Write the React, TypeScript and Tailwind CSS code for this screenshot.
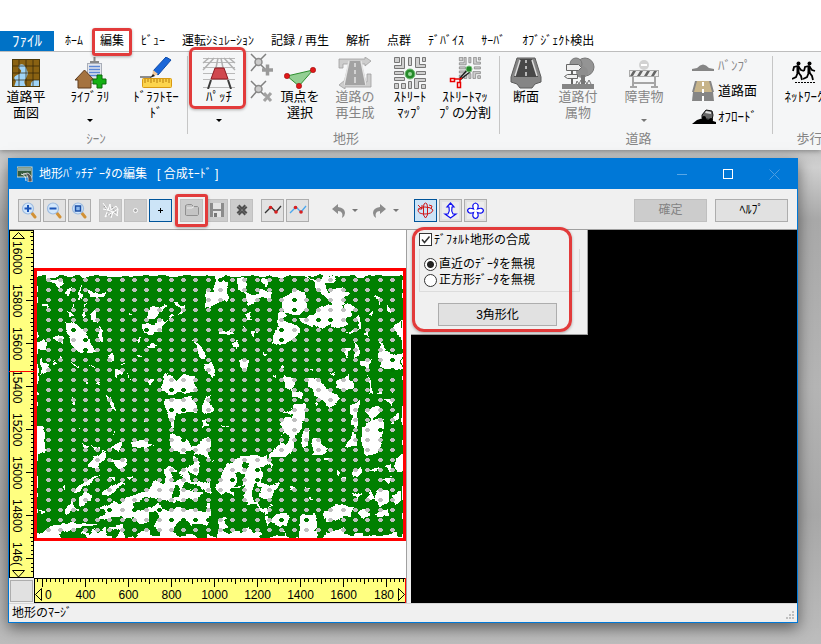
import React from "react";

const jp = "font-['Liberation_Sans','Noto_Sans_CJK_JP',sans-serif]";

function Callout({ className = "" }: { className?: string }) {
  return <span aria-hidden className={`pointer-events-none absolute z-20 border-[3px] border-[#e23b3b] shadow-[0_1px_3px_rgba(0,0,0,.3)] ${className}`} />;
}

/* ---------- ribbon icons ---------- */

const RoadPlan = () => (
  <svg width="32" height="32" viewBox="0 0 32 32">
    <rect x="2" y="2" width="28" height="28" fill="#8a6212" />
    <path d="M9 8q4-2 6 1t3 7q-1 4-3 7t2 7H4l2-6q-4-4 1-6t4-5q-4-2-2-5zM21 30q-1-5 3-7l6 0v7z" fill="#9fd4f8" />
    <path d="M9 2v28M16 2v28M23 2v28M2 9h28M2 16h28M2 23h28" stroke="#2d2208" strokeOpacity=".7" />
    <rect x="2.500" y="2.500" width="27" height="27" fill="none" stroke="#4d3a0a" />
  </svg>
);
const Library = () => (
  <svg width="34" height="32" viewBox="0 0 34 32">
    <rect x="14.500" y="6.500" width="14" height="20" fill="#e3e6ec" stroke="#a9aeb8" />
    <path d="M21.500 0v5M17 5h9" stroke="#888" strokeWidth="2" />
    <path d="M16 9.500h11M16 12.500h11M16 15.500h11M16 18.500h11" stroke="#5b87d6" strokeWidth="1.500" />
    <path d="M2 23 11.500 13 21 23h-3v8H5v-8z" fill="#a5733f" stroke="#5e3c1e" />
    <path d="M24 18h5v4h4v5h-4v4h-5v-4h-4v-5h4z" fill="#14b014" stroke="#0a6a0a" />
  </svg>
);
const Draft = () => (
  <svg width="34" height="32" viewBox="0 0 34 32">
    <path d="M1 20h11" stroke="#222" />
    <path d="M27 0l5 3-13 15-5-4z" fill="#1a66d8" stroke="#0d4aa8" />
    <path d="M14 13l5 4-6 3z" fill="#f3c99a" /><path d="M11 21l3-4 2 2z" fill="#222" />
    <rect x="3.500" y="21.500" width="29" height="9" rx="1" fill="#fcd44c" stroke="#d99a12" />
    <path d="M6 22v4M9 22v3M12 22v4M15 22v3M18 22v4M21 22v3M24 22v4M27 22v3M30 22v4" stroke="#b57a08" />
  </svg>
);
const Patch = () => (
  <svg width="34" height="32" viewBox="0 0 34 32">
    <path d="M1 1.500h32M1 5.500h32M1 10.500h32M1 16.500h32M1 22.500h32M1 30.500h32" stroke="#b9b9b9" />
    <path d="M12 1 1 13M7 1 1 6M16 1l-2 10M19 1l2 10M22 1l11 12M27 1l6 5" stroke="#b0b0b0" fill="none" strokeWidth="1.500" />
    <path d="M13 11h9l4 11H9z" fill="#d0484e" stroke="#8d1a20" />
    <path d="M9 23 6 32M26 23l3 9" stroke="#3c3c3c" strokeWidth="2" />
  </svg>
);
function Vertex({ plus }: { plus?: boolean }) {
  return (
    <svg width="23" height="23" viewBox="0 0 23 23">
      <path d="M1 1l6 6M16 1l-6 6M1 18l6-7M11 12l4 4" stroke="#808080" strokeWidth="1.500" />
      <circle cx="8.500" cy="9" r="3.500" fill="#ccc" stroke="#8c8c8c" strokeWidth="1.500" />
      {plus ? <path d="M17.500 11.500v11M12 17h11" stroke="#9a9a9a" strokeWidth="3.500" /> : <path d="M14 13l7 8M21 13l-7 8" stroke="#a2a2a2" strokeWidth="3" />}
    </svg>
  );
}
const SelectVertex = () => (
  <svg width="32" height="32" viewBox="0 0 32 32">
    <path d="M3 19 29 13 15 29z" fill="#93cf93" stroke="#2f8f2f" />
    {[[3, 19], [29, 13], [15, 29]].map(([x, y]) => <circle key={x} cx={x} cy={y} r="2.700" fill="#e01818" stroke="#8e0909" strokeWidth=".5" />)}
  </svg>
);
const Regenerate = () => (
  <svg width="34" height="32" viewBox="0 0 34 32">
    <path d="M1 11V2h26V0l6 4-6 5V7H5v4z" fill="#cdcdcd" stroke="#a0a0a0" strokeWidth=".8" />
    <path d="M33 17v13H7v2l-6-4 6-5v2h22v-8z" fill="#cdcdcd" stroke="#a0a0a0" strokeWidth=".8" />
    <path d="M11 4h12l6 24H5z" fill="#a2a2a2" />
    <path d="M11 4 6 28M23 4l5 24M17 6v4M17 13v4M17 20v6" stroke="#e4e4e4" strokeWidth="1.500" />
  </svg>
);
function Blocks() {
  return (
    <g fill="#d0d0d0" stroke="#777">
      <path d="M.500.500h5v5h-5zM.500 8.500h7v-8h3v11h-10zM.500 14.500h9v3h-9zM.500 20.500h10v3h-10zM.500 26.500h4v5h-4zM7.500 26.500h4v5h-4z" />
      <path d="M14.500.500h3v8h-3zM21.500.500v10h10v-3h-6v-7zM28.500.500h3v4h-3zM22.500 14.500h9v3h-9zM20.500 21.500h11v3h-7v7h-4zM14.500 24.500h3v7h-3zM27.500 27.500h4v4h-4z" />
    </g>
  );
}
const StreetMap = () => (
  <svg width="32" height="32" viewBox="0 0 32 32">
    <Blocks />
    <circle cx="16" cy="17" r="5" fill="#258a2a" stroke="#77c07a" /><circle cx="16" cy="17" r="2" fill="#9bd79b" />
  </svg>
);
const StreetSplit = () => (
  <svg width="32" height="32" viewBox="0 0 32 32">
    <g transform="translate(10 0) scale(.68)"><Blocks /></g>
    <path d="M20 11 11 21M22 14 11 23" stroke="#222" strokeWidth="1.500" />
    <circle cx="20" cy="12" r="3" fill="#258a2a" stroke="#77c07a" />
    <path d="M1.500 21.500h4v3h-4zM8.500 25.500h3v5h-3z" fill="#fff" stroke="#e80000" strokeWidth="1.500" /><path d="M6 22h5l2-1M11 25v-3" stroke="#e80000" strokeWidth="1.500" fill="none" />
  </svg>
);
const Section = () => (
  <svg width="32" height="32" viewBox="0 0 32 32">
    <path d="M7 1h18l6 19v5l-6 2-3 4H10l-3-4-6-2v-5z" fill="#858585" stroke="#5c5c5c" />
    <path d="M10 2h12l6 18H4z" fill="#484848" /><path d="M16 3v3M16 9v3M16 15v4M10 3 5 19M22 3l5 16" stroke="#ddd" strokeWidth="1.500" />
  </svg>
);
const Accessory = () => (
  <svg width="34" height="32" viewBox="0 0 34 32">
    <circle cx="24" cy="10" r="9" fill="#949494" stroke="#777" /><circle cx="15" cy="7" r="6" fill="#949494" stroke="#777" /><circle cx="21" cy="15" r="6" fill="#8e8e8e" />
    <path d="M20 18h4v10h-4z" fill="#777" /><path d="M15 27l1-3 2 3 2-4 2 4 2-3 2 3 2-4 2 4" stroke="#777" fill="none" />
    <path d="M11 13v15" stroke="#666" strokeWidth="2" />
    <path d="M5.500 7.500h12l3 3-3 3h-12zM16.500 17.500v4h-10l-3-2 3-2z" fill="#efefef" stroke="#666" />
    <path d="M1 27h32v5H1z" fill="#858585" />
  </svg>
);
const Obstacle = () => (
  <svg width="32" height="32" viewBox="0 0 32 32">
    <circle cx="16" cy="8" r="5" fill="#d2d2d2" /><path d="M13 8h6" stroke="#fff" strokeWidth="2" />
    <path d="M5 19v12M27 19v12M2 30h7M23 30h7M5 26h22" stroke="#a5a5a5" strokeWidth="2" fill="none" />
    <rect x="1.500" y="13.500" width="29" height="6" fill="#eee" stroke="#aaa" />
    <path d="M5 14h3l-3 5H2zM12 14h3l-3 5H9zM19 14h3l-3 5h-3zM26 14h3l-3 5h-3z" fill="#666" />
  </svg>
);
const Bump = () => <svg width="22" height="12" viewBox="0 0 22 12"><path d="M0 11V9l5-1q6-7 12 0l5 1v2z" fill="#858585" /></svg>;
const Surface = () => (
  <svg width="22" height="22" viewBox="0 0 22 22"><path d="M4 1h14l3 11H1z" fill="#c7b48a" /><path d="M1 12h20l1 9H0z" fill="#858585" /><path d="M11 2v4M11 9v4M11 16v5" stroke="#fff" strokeWidth="2" /><path d="M0 12 3 1h2L2 12zM20 12 17 1h2l3 11z" fill="#858585" /></svg>
);
const Offroad = () => (
  <svg width="24" height="16" viewBox="0 0 24 16"><path d="M0 15l5-4 6-2 7 2 6 2v2z" /><path d="M10 6l4-5 6 1 1 4-1 5-10-2z" fill="#666" stroke="#111" /><path d="M14 2l5 1v2l-6-1z" fill="#ddd" /><circle cx="12" cy="9" r="2" /><circle cx="19" cy="11" r="2" /></svg>
);
const Walkers = () => (
  <svg width="24" height="32" viewBox="0 0 24 32">
    {[0, 11].map((x) => (
      <g key={x} transform={`translate(${x} 4)`} fill="none" stroke="#000" strokeWidth="1.800">
        <circle cx="6.500" cy="2.500" r="2" fill="#000" stroke="none" />
        <path d="M6 5v7" strokeWidth="3" /><path d="M1 10l1-4 4-1 3 4 3 1M6 11l3 4 1 4M6 11l-2 5-4 2" />
      </g>
    ))}
    <path d="M3 25.500h20" stroke="#000" strokeDasharray="2 1" />
  </svg>
);

type ToolProps = { icon: React.ReactNode; lines: string[]; width: string; arrow?: boolean; off?: boolean; marked?: boolean };
function RibbonTool({ icon, lines, width, arrow, off, marked }: ToolProps) {
  return (
    <button type="button" disabled={off} className={`relative flex shrink-0 flex-col items-center text-[13px] leading-4 whitespace-nowrap ${width} ${off ? "text-[#858585]" : "text-black"}`}>
      {marked && <Callout className="-top-2.5 -left-0.5 right-px h-[62px] rounded-md" />}
      <span className="flex h-8 items-center">{icon}</span>
      {lines.map((l) => <span key={l}>{l}</span>)}
      {arrow && <span className={`mt-3.5 border-x-[3px] border-t-[3px] border-x-transparent ${off ? "border-t-[#777]" : "border-t-black"}`} />}
    </button>
  );
}
function Group({ label, width, children }: { label: string; width: string; children: React.ReactNode }) {
  return (
    <section aria-label={label} className={`relative shrink-0 ${width}`}>
      <div className="flex h-[77px] items-start pt-[3px]">{children}</div>
      <div className="pl-1 text-center text-[13px] leading-4 text-[#858585]">{label}</div>
      <span className="absolute top-0.5 right-0 h-[78px] w-px bg-[#c6c6c6]" />
    </section>
  );
}

function Ribbon() {
  const tabs = ["ﾋﾞｭｰ", "運転ｼﾐｭﾚｰｼｮﾝ", "記録 / 再生", "解析", "点群", "ﾃﾞﾊﾞｲｽ", "ｻｰﾊﾞ", "ｵﾌﾞｼﾞｪｸﾄ検出"];
  return (
    <header className="overflow-hidden bg-white pt-[31px] shadow-[0_1px_5px_rgba(0,0,0,.35)]">
      <nav className="flex h-5 items-center gap-[17px] text-[12px] whitespace-nowrap">
        <button type="button" className="-mr-1.5 h-5 w-[54px] shrink-0 bg-[#0072c6] text-[15px] leading-5 text-white">ﾌｧｲﾙ</button>
        <button type="button">ﾎｰﾑ</button>
        <button type="button" className="relative">
          編集
          <Callout className="-inset-x-2 -top-1 -bottom-1.5 rounded-[3px]" />
        </button>
        {tabs.map((t) => <button type="button" key={t}>{t}</button>)}
      </nav>
      <div className="flex h-[99px] border-t border-[#bdbdbd] bg-[#f5f6f7] pt-0.5">
        <Group label="ｼｰﾝ" width="w-[188px]">
          <RibbonTool icon={<RoadPlan />} lines={["道路平", "面図"]} width="w-[52px]" />
          <RibbonTool icon={<Library />} lines={["ﾗｲﾌﾞﾗﾘ"]} width="w-[76px]" arrow />
          <RibbonTool icon={<Draft />} lines={["ﾄﾞﾗﾌﾄﾓｰ", "ﾄﾞ"]} width="w-14" />
        </Group>
        <Group label="地形" width="w-[312px]">
          <div className="w-[3px] shrink-0" />
          <RibbonTool icon={<Patch />} lines={["ﾊﾟｯﾁ"]} width="w-14" arrow marked />
          <div className="-mt-1 flex w-[26px] shrink-0 flex-col items-end gap-1">
            <button type="button" aria-label="頂点の追加"><Vertex plus /></button>
            <button type="button" aria-label="頂点の削除"><Vertex /></button>
          </div>
          <RibbonTool icon={<SelectVertex />} lines={["頂点を", "選択"]} width="w-[54px]" />
          <RibbonTool icon={<Regenerate />} lines={["道路の", "再生成"]} width="w-14" off />
          <RibbonTool icon={<StreetMap />} lines={["ｽﾄﾘｰﾄ", "ﾏｯﾌﾟ"]} width="w-[54px]" />
          <RibbonTool icon={<StreetSplit />} lines={["ｽﾄﾘｰﾄﾏｯ", "ﾌﾟの分割"]} width="w-14" />
        </Group>
        <Group label="道路" width="w-[273px]">
          <RibbonTool icon={<Section />} lines={["断面"]} width="w-[52px]" />
          <RibbonTool icon={<Accessory />} lines={["道路付", "属物"]} width="w-[52px]" off />
          <div className="w-3.5 shrink-0" />
          <RibbonTool icon={<Obstacle />} lines={["障害物"]} width="w-[52px]" arrow off />
          <div className="-mt-0.5 ml-[22px] flex flex-col text-[13px]">
            <button type="button" disabled className="flex h-[22px] items-center gap-1 text-[#858585]"><Bump />ﾊﾞﾝﾌﾟ</button>
            <button type="button" className="flex h-7 items-center gap-1"><Surface />道路面</button>
            <button type="button" className="flex h-6 items-center gap-0.5"><Offroad />ｵﾌﾛｰﾄﾞ</button>
          </div>
        </Group>
        <Group label="歩行者" width="w-[82px]">
          <RibbonTool icon={<Walkers />} lines={["ﾈｯﾄﾜｰｸ"]} width="w-[62px]" />
        </Group>
      </div>
    </header>
  );
}

/* ---------- dialog toolbar ---------- */

function Lens({ kind }: { kind: "in" | "out" | "fit" }) {
  return (
    <svg width="17" height="17" viewBox="0 0 17 17">
      <path d="M10 10l4 5" stroke="#d29136" strokeWidth="3" strokeLinecap="round" />
      <circle cx="7" cy="6.500" r="5.500" fill="#d3e7fb" stroke="#9dbbe0" strokeWidth="1.200" />
      {kind === "fit" ? <rect x="4.500" y="4" width="5" height="5" fill="#8bb8ee" stroke="#1c4fa5" strokeWidth="1.500" /> : <path d={kind === "in" ? "M3.500 6.500h7M7 3v7" : "M3.500 6.500h7"} stroke="#1c55b8" strokeWidth="2" />}
    </svg>
  );
}
function ToolButton({ label, state = "normal", marked, children }: { label: string; state?: "normal" | "off" | "on"; marked?: boolean; children: React.ReactNode }) {
  const look = state === "on" ? "border-[#00549a] bg-[#cce4f7]" : state === "off" ? "border-[#c0c0c0] bg-[#cccccc]" : "border-[#adadad] bg-[#e2e2e2]";
  return (
    <button type="button" aria-label={label} className={`relative flex size-[23px] shrink-0 items-center justify-center border ${look}`}>
      {children}
      {marked && <Callout className="-inset-[6px] rounded-[3px]" />}
    </button>
  );
}
function History({ label, flip }: { label: string; flip?: boolean }) {
  return (
    <button type="button" aria-label={label} className="flex items-center gap-1.5">
      <svg width="15" height="15" viewBox="0 0 15 15" className={flip ? "-scale-x-100" : ""}><path d="M1 6l6-5v3q7 1 7 6 0 3-3 5 1-3 0-5-1-2-4-2v3z" fill="#8c8c8c" /></svg>
      <span className="border-x-[3px] border-t-[3px] border-x-transparent border-t-[#777]" />
    </button>
  );
}
function Toolbar() {
  const set = "flex gap-0.5";
  return (
    <div className="flex h-[41px] shrink-0 items-center gap-2 border-b border-[#a0a0a0] bg-[#f0f0f0] pt-0.5 pr-[9px] pl-[9px]">
      <div className={set}>
        <ToolButton label="拡大"><Lens kind="in" /></ToolButton>
        <ToolButton label="縮小"><Lens kind="out" /></ToolButton>
        <ToolButton label="全体"><Lens kind="fit" /></ToolButton>
      </div>
      <div className={set}>
        <ToolButton label="三角網" state="off"><svg width="17" height="17" fill="none"><path d="M1 1l5 7 2-6 1 6 5-4M1 7l5 1-3 7M6 8l5 2 5-3M11 10l-2 6M11 10l5 4M3 15l8-5M14 4l2 3-1 7" stroke="#fff" /><path d="M2 4l5 7M10 5l4 7M5 13l6 0" stroke="#888" strokeDasharray="1 2" /></svg></ToolButton>
        <ToolButton label="点" state="off"><svg width="7" height="7"><circle cx="3.500" cy="3.500" r="2" fill="#aaa" stroke="#fff" /></svg></ToolButton>
        <ToolButton label="追加" state="on"><svg width="5" height="5"><path d="M0 2.500h5M2.500 0v5" stroke="#000" /></svg></ToolButton>
      </div>
      <div className={set}>
        <ToolButton label="開く" state="off" marked><svg width="15" height="14"><path d="M1.500 12V2.500l2-1h4l2 2h4l1 1v7l-1 1h-11z" fill="#c4c4c4" stroke="#909090" /><path d="M3 5h5l2-1.500" stroke="#eee" fill="none" /></svg></ToolButton>
        <ToolButton label="保存" state="off"><svg width="14" height="14"><path d="M0 0h14v14H0z" fill="#8b8b8b" /><path d="M3 0h8v6H3zM3 8h8v6H3z" fill="#e4e4e4" /><path d="M4 10h3v4H4z" fill="#777" /></svg></ToolButton>
        <ToolButton label="削除" state="off"><svg width="12" height="12"><path d="M2 2l8 8M10 2l-8 8" stroke="#505050" strokeWidth="4" /><path d="M2 2l8 8M10 2l-8 8" stroke="#888" strokeDasharray="1 1" /></svg></ToolButton>
      </div>
      <div className={set}>
        {["#333", "#4aa7ee"].map((c) => (
          <ToolButton key={c} label={c === "#333" ? "折れ線" : "折れ線の補正"}><svg width="18" height="12"><path d="M1 9l6-6 5 5 5-6" fill="none" stroke={c} strokeWidth="1.300" /><circle cx="6.500" cy="3.500" r="1.800" fill="#d82020" /><circle cx="12" cy="8" r="1.800" fill="#d82020" /></svg></ToolButton>
        ))}
      </div>
      <div className="ml-3.5 flex gap-3.5"><History label="元に戻す" /><History label="やり直し" flip /></div>
      <div className={`${set} ml-[7px]`}>
        <ToolButton label="回転" state="on"><svg width="17" height="17" fill="none" stroke="#d01818"><path d="M6.500 5q0-4 2-4t2 4v8l-2 3-2-3zM1 8q1-3 7-3t8 3q-1 4-8 4T1 8zM1 3l4 4M5 3v4H1M12 3l3 1-1 3" /></svg></ToolButton>
        <ToolButton label="前後移動"><svg width="17" height="17"><rect width="17" height="17" fill="#ececec" /><path d="M8.500 1 12 5h-2q-1 4 1 7h3l-5.500 4L3 12h3q2-3 1-7H5z" fill="#fff" stroke="#1010f0" strokeWidth="1.200" /></svg></ToolButton>
        <ToolButton label="平行移動"><svg width="17" height="17"><rect width="17" height="17" fill="#ececec" /><path d="M8.500 1q4 1 2 6 5-2 6 1.500-1 4-6 2 2 5-2 6-4-1-2-6-5 2-6-2 1-3.500 6-1.500-2-5 2-6z" fill="#fff" stroke="#1010f0" strokeWidth="1.200" /></svg></ToolButton>
      </div>
      <div className="ml-auto flex gap-2 text-[12px]">
        <button type="button" disabled className="h-[23px] w-[73px] border border-[#bfbfbf] bg-[#cccccc] leading-5 text-[#838383]">確定</button>
        <button type="button" className="h-[23px] w-[73px] border border-[#adadad] bg-[#e1e1e1] leading-5">ﾍﾙﾌﾟ</button>
      </div>
    </div>
  );
}

/* ---------- terrain map ---------- */

/* Each sheet covers a quarter of the survey; outlines are in thirds of a map unit. */
const sheets = [
  {
    at: "translate(0 228) scale(.33333)",
    gaps:
      "M138 138l10 12 37 0 3 18-12 14-12-16-15-4-10-12zM125 223l15 3 5 14-15-8zM248 167l-8 23 3 22-11 4 3-26zM265 190l20 1 13 8 20-3-3 12-25-2-25-4zM195 192l20-12-3 15-7 13zM202 248l12 3 6 12-16 0zM215 226l8 10-8 6zM272 262l14-14 0 26 9 12-20-6zM246 260l12-12 2 14-10 8zM192 283l23-3 20 10 20 20 15 30 23 32-38 1-27-3-13-25-15-25 5-20zM298 295l5 3 5 38-10 6zM110 340l20-3 15 11-5 15-15 3-15-5zM160 328l20-3 11 10-3 14-13-8zM122 385l8 15 17 10-10 20-18 12 4-27zM322 380l10-9 12 9-8 19-12-8zM342 420l28 4-2 18-18 4-8-6zM425 290l15-8 15 8 25-10 15-15 20-7 22-26 22 3-14 20-25 5-30 28 0 20-30 5-5 10-25-6zM440 250l20-16 30 5 5 23-25 9-30-3zM408 342l15-12-6 15zM440 350l20-5 12 10-17 10zM485 460l7-24 22 8 16 14 20-20 30 9 6 13-2 32-85 6-11-10zM494 512l76-5 18 12 0 32-62 8-6 45-10-28-12-22zM580 337l32 28 3 28-15-2-12-22zM438 454l30-6-14 28zM318 498l18 14 10 34-16-6zM214 512l9-9-2 30-10-4zM284 460l17-3-4 14zM610 512l22-14 0 60-22-8zM618 210l12-12 0 42-12-8zM408 376l20 6-8 8zM265 404l22 16-10-4zM213 397l20 22-10-6zM120 500l-10 8 2-10zM250 228l14-6-10 12zM386 252l10 5-6 5zM388 430l4 22-4-2zM365 405l8 2-4 4zM618 408l14-6 0 20zM605 580l12-6 4 24-14 4zM435 570l6 10-6 2zM255 455l14 10-5 5zM525 222l10-4 6 14-10 6zM475 238l16-10 10 8-20 10zM185 378l8 8-12 4zM160 400l14 5-10 3z",
    islands: "M470 268l22-14 15 12-15 12zM512 250l18-14 12 8-16 14z",
  },
  {
    at: "translate(205 228) scale(.33333)",
    gaps:
      "M30 138l30 6-4 14 10 8 6 48-36 10-36 16 0-48 26-4 4-24zM95 146l35 4-6 30 36-12 10 20 30 2-4 22-32-6-14 20-22 5-8-27-20-20zM170 146l22 10-4 20-18-12zM300 140l42 22 14-18 40 4-8 16-30 0 14 26 42-12 22 20-32 18 25 12-42 10-30-36-26-18 0-20zM268 188l32 0 6 50-22 20-24 6-26 4 46 32 4 15-34 30-25 12-26-18 16-42 0-44 16 0-2-40 25-20zM285 270l45-8 10-22 35-14 40 7 15 57-30 10-25-8-26 13-19-16-30 2zM420 240l14-14 20 10-20 12 8 18-20 4zM103 392l30 8-11 36-17-16zM0 400l20 12 18 16-16 26-17-28zM42 316l28-12 20 14-26 5zM80 345l18-6-5 26zM120 262l14-6 4 22-12-4zM135 315l30-6-20 14zM110 290l12 4-6 6zM305 455l46-6 8 26 42 36-20 26-32-22-30-26zM390 460l42-22 14 38-26 14-26-10zM524 332l20 36 16 8 32 2 0 52-32-6-38-4zM240 440l32 20-10 30-22-12zM262 488l38 4-4 18-36-4zM268 530l34 0 0 52-32 20-42 0 2-18 34-14zM235 555l25-14 14 6-28 14zM0 498l30 46-10 12-20-2zM435 538l35-20-15 34 6 50-22-12zM485 550l30-22 16 18-30 34zM538 514l34-6-12 30zM418 366l18-8-8 32zM448 345l18 26-16 26zM468 400l26-6 0 26-26-4zM486 438l16 62-12-2zM508 198l18 16-5 18zM545 222l15 30-14-4zM560 302l30-28 4 48-22-6zM484 600l44-32 14 32zM422 318l40-18-10 12-26 8zM450 270l14-12 0 40zM488 260l14-12-4 20zM470 318l18-6 6 20zM370 440l24-8-8 14zM316 424l5 6 0-8zM200 448l14-10-8 16zM170 376l16 2-8 6zM226 420l8-10 6 12zM330 520l14 10-10 5zM520 500l10-12 0 12zM560 490l12-4-4 12zM45 598l25-4 0 6zM560 575l18-20 8 20z",
    islands: "M240 260l25 4 20 10-10 16-20-12zM120 190l12-20 30-4 6 18-26 18z",
  },
  {
    at: "translate(0 420) scale(.33333)",
    gaps:
      "M110 12l20 10 6 72-26 12zM388 70l42-12 16 14 16 0-26 14-36-6zM268 122l42-28 12 6-12 25-20 20-22 0zM328 84l44-20-20 26zM243 64l24 12-6 10zM275 68l26 18-18 0zM330 124l46-10 5 20-20 16zM218 216l42-34 48-18-36 26-50 34zM233 236l27-22 16 10-4 22-28 12zM194 272l22-34 8 26 22 6-48 16zM310 215l50-25 18-2-40 30-25 12zM110 352l22-18 24-18 84-8 50 6 24-4 50 0 6 20-40 24zM370 238l68-24 34-26 20 0 5-40 14-12 2-92 60-4 30-20 27-10 0 344-306 0-6-44-24-16 40-24zM300 265l40-20 20 14-48 20zM150 340l22-4-4 20-20 0zM112 272l20 6-14 8zM180 198l14-4-4 14zM325 172l18-6 0 14zM382 164l22 4-10 14zM236 20l4 6-4 6zM338 30l8 6-8 4zM458 188l16-8 16 18-14 30-26 4z",
    islands:
      "M540 42l30 30 40-10 20-20 0-24-60 16zM510 96l30 4 40-8-4 40-30 20-40-20-36 30-10-40zM585 106l20 18-10 42 35 22 0-70zM512 158l26-6 12 22-24 10zM524 200l14 10 0 20-20-2zM566 156l30 14 30 0 0 10-50 4zM556 188l40 12 34 26 0 20-40 10-30 0-40 4 10-14 70-10 14-16-66-16zM400 252l50-22 70 20 100 5-10 16-72-8-50 2-20-12-58 18zM450 278l20-6 6 20-18 30 20 10 0 20-26-8zM370 300l30-6 20 20 36-4 4 16-50 12-10 16-30-2zM300 300l66-10 10 18-60 12-20 16-14-8zM540 300l30 16 40-2 14 14-6 30-26 0-12-16-40 4-16-10zM290 320l-20 20-34-10 24 26-52 4-18-10-10 6 4-16 46-14zM326 322l30 12-8 18-32-4z",
  },
  {
    at: "translate(205 420) scale(.33333)",
    gaps:
      "M234-6l66 0-20 40-16 24 0 30-30 40-38-6-4-22 34-24 8-36zM300 26l12-8-2 60-10 10-8-30zM318 84l4-24 18-10 8 22 22 14-16 16-28 0zM68 132l38-24 76-4 20 36-6 40 34 8-20 20-14 32 14 26-40 20-66-22-46-14-24-48 16-40zM0 60l0 30-6 16 20-4zM0 125l30-8-8 5zM420 80l26-46 10 30-10 18zM470 20l20-10 20-10 24 0 0 40-16 56-32 12-16-24 0-40zM440 148l30-6 6 14-20 18-14-8zM258 195l16 0 0 14-18 2zM206 98l20 0 10 20-26 4zM490 156l30-12-4 14zM520 206l30 6 0 34-24 14-20-26zM484 226l12-14 10 20-16 8zM538 140l22-6-4 20zM572 116l18-10 4 50-20-4zM540 178l20-10-6 24zM370 264l40-8 30 6 0 30-24-4-50 22-14-30zM286 290l46-8 6 30-12 30-10 10-30 4-14-30zM510 284l40-14 4 16-32 6zM560 224l28-14 4 30-22 12zM460 280l20-14 10 20-12 8zM180 290l60-20 20 30-6 20-46-10-26 10zM210 340l30-10 0 22-30 4zM40 300l20-10 10 24-30 20 70 4 20-10 40 10-10 16-120 0 0-24zM-6 300l20 6 6 14-26-6zM270 338l70-4-10 20-60 0zM358 338l60-16 0 32-60 0zM446 338l30 0-6 16-26 0zM492 344l80-4 0 14-80 0zM300 205l22 4-20 4zM310 235l22 2-20 4zM440 226l30-10-14 22zM560 8l12-14-2 20zM354 118l10-8 4 12zM396 150l10 12-8 4zM406 172l14-6-4 14z",
    islands:
      "M120 120l14 8-8 14-14-6zM96 160l20 4-4 30-18-2zM168 138l20 0 26 26 26-2-20 24-30 10-20-8zM94 204l20-4-4 26 14 20-36 10-4-14zM150 190l18 10-10 26 30 16 20-10 8 18-28 14-40-18zM60 220l36 26 60 14 20 18-12 12-40-14-60-12-30-20zM20 150l14 14-6 40-14 0 0-28zM20 264l14 10 0 30-12 32-20 6 8-30zM60 300l40-10 80 16 14 30 40 0 0 16-60-8-24-28-50 4-30 10zM260 280l22 20-2 50-30 2-10-14zM342 300l18-4 4 20-10 40-20 0 6-26zM240 40l14 8-10 24-16-8zM204 114l30-2 24 12-18 14-36-8zM184 270l46-14 20 0 0 16-30 4-26 20z",
  },
];
const openGround = new Set("2,5 3,6 3,7 8,5 10,11 11,11 10,13 11,13 14,0 20,2 20,3 22,4 23,4 19,5 19,6 28,8 28,9 11,16 5,23 7,23 9,23 10,24 11,24 12,24 15,20 15,21 17,19 17,20 19,24 13,24 21,24 22,24 27,15".split(" "));

/* Outlines are filled one by one, so that overlapping ones add up whatever their winding. */
const outlines = (d: string) => d.split("z").filter(Boolean).map((o) => <path key={o} d={`${o}z`} />);

function TerrainMap() {
  const nodes: React.ReactNode[] = [];
  for (let c = 0; c < 29; c++)
    for (let r = 0; r < 26; r++) {
      const x = Math.round(48 + c * 12.28);
      const y = 279 + r * 10;
      nodes.push(
        <g key={`${c},${r}`} fill={openGround.has(`${c},${r}`) ? "#007a00" : "#c0c0c0"}>
          <rect x={x - 2} y={y} width="5" height="2" />
          <rect x={x - 1} y={y - 1} width="3" height="4" />
        </g>,
      );
    }
  return (
    <svg className="h-full w-full bg-white" viewBox="34 230 372 348" preserveAspectRatio="xMinYMin meet" shapeRendering="crispEdges" role="img" aria-label="地形ﾊﾟｯﾁ">
      <defs>
        <filter id="rough" x="-5%" y="-5%" width="110%" height="110%">
          <feTurbulence type="fractalNoise" baseFrequency=".12" numOctaves="1" seed="4" />
          <feDisplacementMap in="SourceGraphic" scale="8" xChannelSelector="R" yChannelSelector="G" />
        </filter>
      </defs>
      <rect x="35.500" y="269.500" width="369" height="270" fill="#fff" stroke="#f00" strokeWidth="3" />
      <g filter="url(#rough)">
        <rect x="37" y="276" width="366" height="261" fill="#008000" />
        <path d="M37 538V533l90-2 60 4 50 2 60 0 50-2 56 2v1z" fill="#fff" />
        {sheets.map((s) => (
          <g key={s.at} transform={s.at}>
            <g fill="#fff">{outlines(s.gaps)}</g>
            <g fill="#008000" stroke="#008000" strokeWidth="4" strokeLinejoin="round">{outlines(s.islands)}</g>
          </g>
        ))}
      </g>
      <path d="M35.500 540V269.500H404.500V539.500H34" fill="none" stroke="#f00" strokeWidth="3" />
      {nodes}
    </svg>
  );
}

function VerticalRuler() {
  const labels = ["16000", "15800", "15600", "15400", "15200", "15000", "14800", "146("];
  return (
    <svg className="h-full w-[25px] shrink-0 bg-[#ffff80]" viewBox="9 230 25 348" preserveAspectRatio="xMinYMin slice">
      <path d="M9 230.500h25M33.500 230v348M9.500 230v348M9 577.500h25" stroke="#000" fill="none" />
      <g shapeRendering="crispEdges" stroke="#000">
        {Array.from({ length: 80 }, (_, i) => { const y = Math.round(231.500 + i * 4.3) + 0.5; return <path key={i} d={`M${i % 10 === 6 ? 26 : i % 10 === 1 ? 30 : 31} ${y}H34`} />; })}
      </g>
      {labels.map((l, i) => <text key={l} x={i === 7 ? 542 : 241 + i * 43} y="-13" transform="rotate(90)" className="text-[12px]">{l}</text>)}
      <path d="M18.500 232.500l6 6h-12zM12.500 570.500h12l-6 6.500z" fill="#ffff80" stroke="#000" />
      <path d="M9 371.500h25" stroke="#f00" />
    </svg>
  );
}
function HorizontalRuler() {
  const labels = ["400", "600", "800", "1000", "1200", "1400", "1600"];
  return (
    <svg className="h-full min-w-0 flex-1 bg-[#ffff80]" viewBox="34 578 372 25" preserveAspectRatio="xMinYMin slice">
      <path d="M34 578.500h372M34 602.500h372M34.500 578v25" stroke="#000" fill="none" />
      <g shapeRendering="crispEdges" stroke="#000">
        {Array.from({ length: 86 }, (_, i) => { const x = Math.round(37.400 + i * 4.3) + 0.5; return <path key={i} d={`M${x} 579v${i % 10 === 1 ? 8 : i % 10 === 6 ? 5 : 3}`} />; })}
      </g>
      <text x="45" y="598.500" className="text-[12px]">0</text>
      {labels.map((l, i) => <text key={l} x={85.500 + i * 43} y="598.500" textAnchor="middle" className="text-[12px]">{l}</text>)}
      <text x="374" y="598.500" className="text-[12px]">180</text>
      <path d="M35.500 594.500l6-6v12zM398.500 588.500v12l6-6z" fill="#ffff80" stroke="#000" />
      <path d="M405.500 578v25" stroke="#f00" />
    </svg>
  );
}

function OptionsPanel() {
  const radio = "size-[13px] appearance-none rounded-full border border-[#333] bg-white checked:bg-[radial-gradient(circle,#222_0_3px,#fff_4px)]";
  return (
    <form className="relative h-[105px] w-[177px] border-r border-b border-[#a0a0a0] bg-[#f0f0f0] pl-2 text-[12px] leading-4">
      <label className="flex h-[19px] items-center gap-0.5 whitespace-nowrap">
        <span className="relative flex size-[13px]">
          <input type="checkbox" defaultChecked className="peer size-[13px] appearance-none border border-[#333] bg-white" />
          <svg width="13" height="13" className="pointer-events-none absolute inset-0 hidden peer-checked:block"><path d="M3 6.500l2.500 3 5-6" fill="none" stroke="#333" strokeWidth="1.500" /></svg>
        </span>
        ﾃﾞﾌｫﾙﾄ地形の合成
      </label>
      <fieldset className="mr-[7px] h-[43px] border border-t-0 border-[#dcdcdc] pt-[7px] pl-1 whitespace-nowrap">
        <label className="flex items-center gap-0.5"><input type="radio" name="ignore" defaultChecked className={radio} />直近のﾃﾞｰﾀを無視</label>
        <label className="flex items-center gap-0.5"><input type="radio" name="ignore" className={radio} />正方形ﾃﾞｰﾀを無視</label>
      </fieldset>
      <button type="button" className="mt-[11px] ml-[19px] h-[23px] w-[119px] border border-[#adadad] bg-[#e1e1e1] leading-5">3角形化</button>
      <Callout className="-top-[3px] left-px right-[15px] bottom-0.5 rounded-xl" />
    </form>
  );
}

function PatchDialog() {
  return (
    <main className="mt-2 mr-[23px] mb-[21px] ml-2 flex flex-1 flex-col border border-[#0078d7] bg-[#f0f0f0] shadow-[0_5px_14px_rgba(0,0,0,.5)]">
      <div className="flex h-[30px] shrink-0 items-center bg-[#0078d7] pl-2 text-[12px] text-white">
        <svg width="16" height="16" viewBox="0 0 16 16"><rect x="0" y="1" width="15" height="10" fill="#355b3d" stroke="#d7dccf" /><path d="M1 2h13v3H1z" fill="#8ba9a5" /><path d="M6 8q6-1 5 8h4q1-6-4-9z" fill="#555" stroke="#e5e5e5" strokeWidth=".8" /><path d="M4 8q5 1 5 7" stroke="#eee" fill="none" /></svg>
        <h1 className="ml-1.5 whitespace-pre">地形ﾊﾟｯﾁﾃﾞｰﾀの編集   [ 合成ﾓｰﾄﾞ ]</h1>
        <div className="ml-auto flex h-full items-center">
          <button type="button" aria-label="最小化" className="flex h-full w-[46px] items-center justify-center"><span className="h-px w-2.5 bg-[#59a7e6]" /></button>
          <button type="button" aria-label="最大化" className="flex h-full w-[46px] items-center justify-center"><span className="size-2.5 border border-white" /></button>
          <button type="button" aria-label="閉じる" className="flex h-full w-[46px] items-center justify-center"><svg width="11" height="11"><path d="M.5.5l10 10M10.500.5l-10 10" stroke="#4c9de0" /></svg></button>
        </div>
      </div>
      <Toolbar />
      <div className="flex min-h-[373px] flex-1">
        <div className="flex w-[402px] shrink-0 flex-col">
          <div className="flex min-h-0 flex-1">
            <VerticalRuler />
            <div className="min-w-0 flex-1"><TerrainMap /></div>
            <div className="w-[5px] shrink-0 border-l border-[#a0a0a0]" />
          </div>
          <div className="flex h-[25px] shrink-0">
            <div className="m-px mt-0.5 w-[23px] shrink-0 border border-[#adadad] bg-[#e1e1e1]" />
            <HorizontalRuler />
            <div className="w-[5px] shrink-0 border-l border-[#a0a0a0]" />
          </div>
        </div>
        <div className="flex-1 bg-black"><OptionsPanel /></div>
      </div>
      <footer className="flex h-[19px] shrink-0 items-center justify-between border-t border-[#d7d7d7] pr-0.5 pl-[3px] text-[12px] leading-4">
        <span>地形のﾏｰｼﾞ</span>
        <svg width="9" height="9" className="mb-0.5 self-end" fill="#bfbfbf"><path d="M6 0h2v2H6zM3 3h2v2H3zM6 3h2v2H6zM0 6h2v2H0zM3 6h2v2H3zM6 6h2v2H6z" /></svg>
      </footer>
    </main>
  );
}

export default function App() {
  return (
    <div className={`flex min-h-screen flex-col overflow-hidden bg-[linear-gradient(to_bottom,#c4c4c4_23%,#d0d0d0_26%,#a9a9a9_34%,#b5b5b5_60%,#a8a8a8_80%,#bdbdbd_100%)] text-black ${jp}`}>
      <Ribbon />
      <PatchDialog />
    </div>
  );
}
